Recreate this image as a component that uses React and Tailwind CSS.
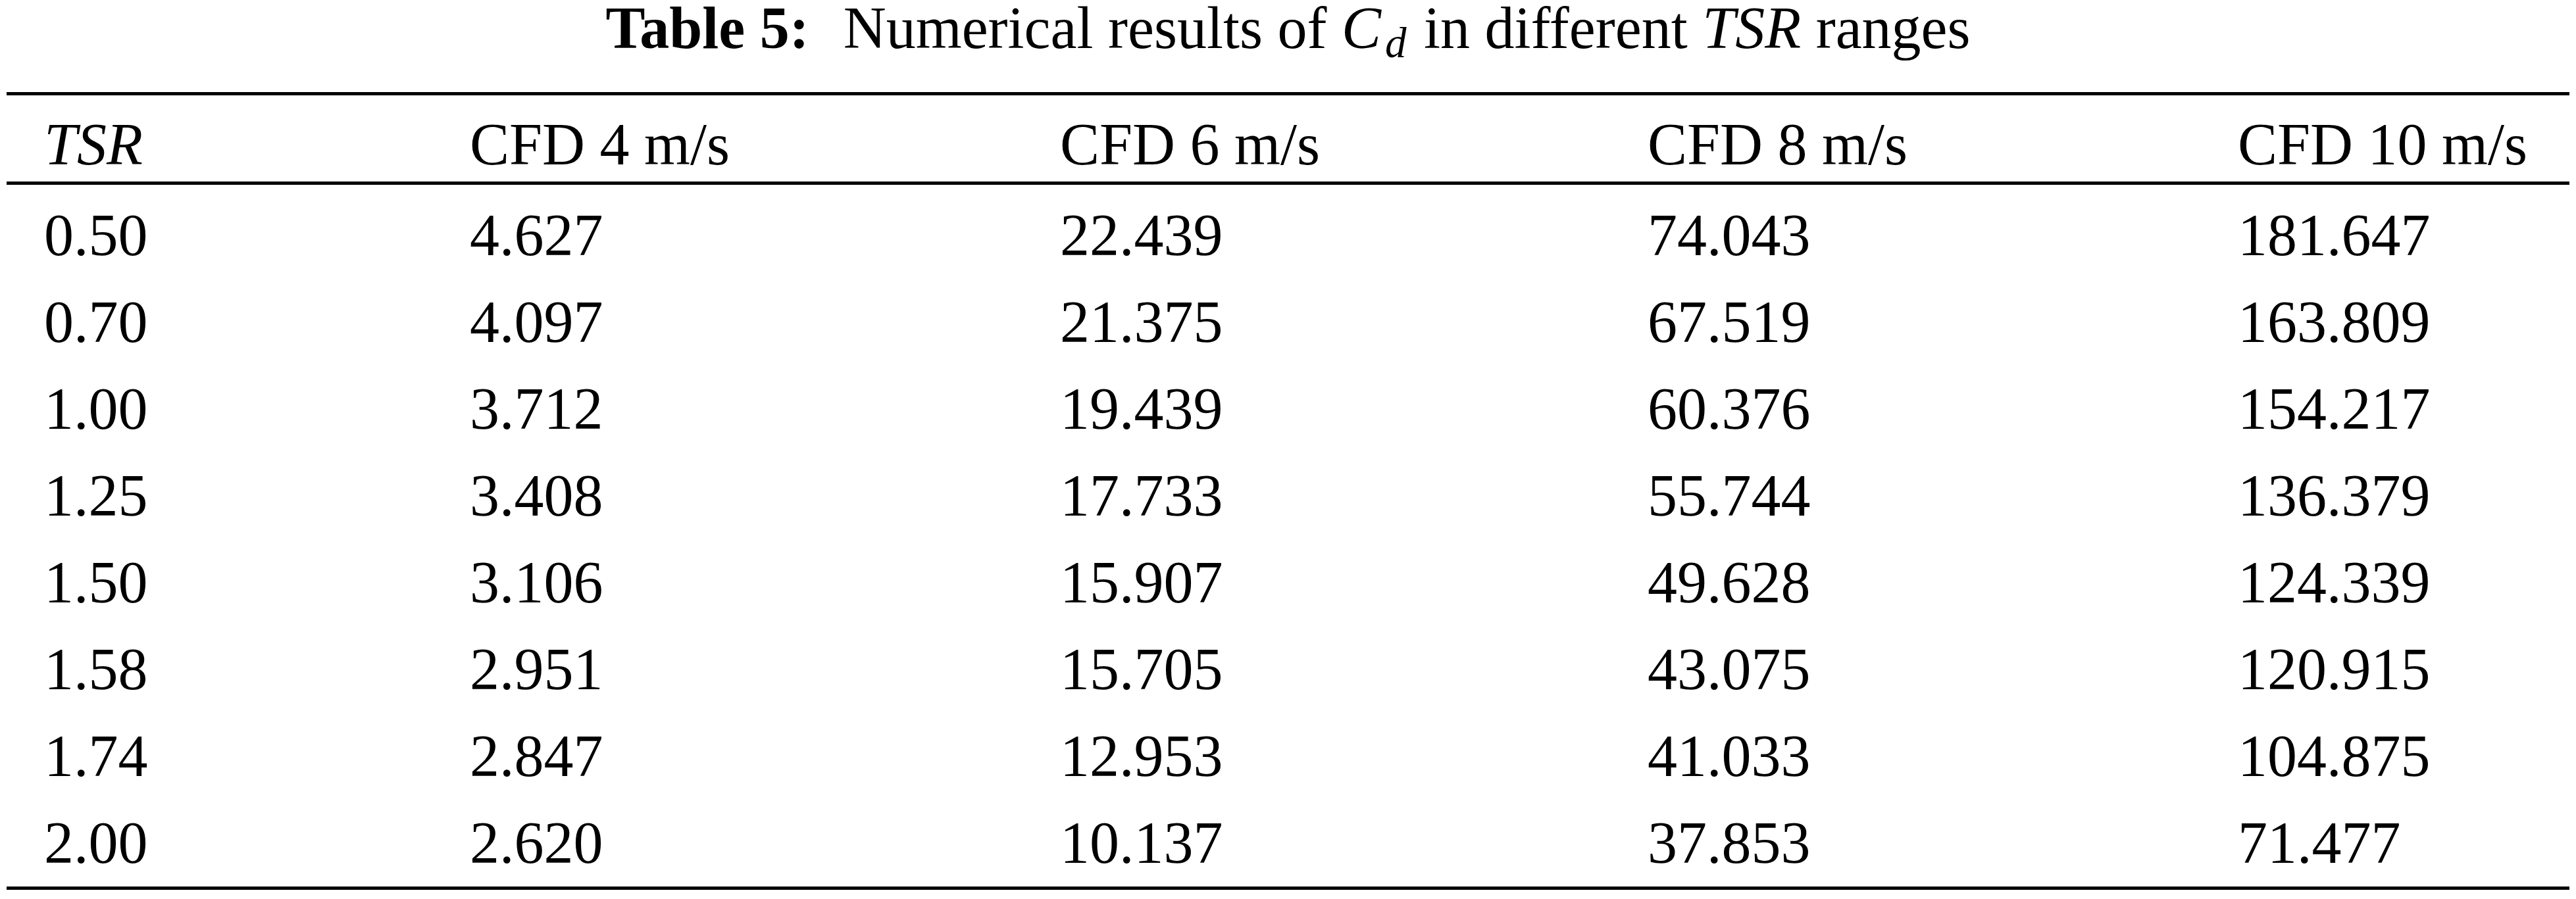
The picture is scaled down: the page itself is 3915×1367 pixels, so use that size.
import React from "react";

const rows = [
  ["0.50", "4.627", "22.439", "74.043", "181.647"],
  ["0.70", "4.097", "21.375", "67.519", "163.809"],
  ["1.00", "3.712", "19.439", "60.376", "154.217"],
  ["1.25", "3.408", "17.733", "55.744", "136.379"],
  ["1.50", "3.106", "15.907", "49.628", "124.339"],
  ["1.58", "2.951", "15.705", "43.075", "120.915"],
  ["1.74", "2.847", "12.953", "41.033", "104.875"],
  ["2.00", "2.620", "10.137", "37.853", "71.477"],
];

const gridCols = "grid grid-cols-[647px_897px_893px_897px_1fr]";

export default function App() {
  return (
    <div
      className="w-[3915px] h-[1367px] bg-white text-black text-[90px] overflow-hidden"
      style={{ fontFamily: '"Liberation Serif", "Times New Roman", serif' }}
    >
      <div className="leading-[86px] text-center whitespace-nowrap mb-[54px]">
        <span className="font-bold">Table 5:</span>
        <span className="ml-[52px]">Numerical results of </span>
        <span className="italic">C</span>
        <sub className="italic text-[65px] relative top-[14px] align-baseline ml-[6px] mr-[4px]">d</sub>
        <span> in different </span>
        <span className="italic">TSR</span>
        <span> ranges</span>
      </div>
      <div className="mx-[10px] border-t-[5px] border-b-[5px] border-black">
        <div className={`${gridCols} pt-[18px] leading-[113px] border-b-[5px] border-black`}>
          <div className="pl-[57px] italic">TSR</div>
          <div className="pl-[57px]">CFD 4 m/s</div>
          <div className="pl-[57px]">CFD 6 m/s</div>
          <div className="pl-[57px]">CFD 8 m/s</div>
          <div className="pl-[57px]">CFD 10 m/s</div>
        </div>
        <div className="pt-[11px]">
          {rows.map((r) => (
            <div key={r[0]} className={`${gridCols} leading-[132px]`}>
              {r.map((c, i) => (
                <div key={i} className="pl-[57px]">
                  {c}
                </div>
              ))}
            </div>
          ))}
        </div>
      </div>
    </div>
  );
}
